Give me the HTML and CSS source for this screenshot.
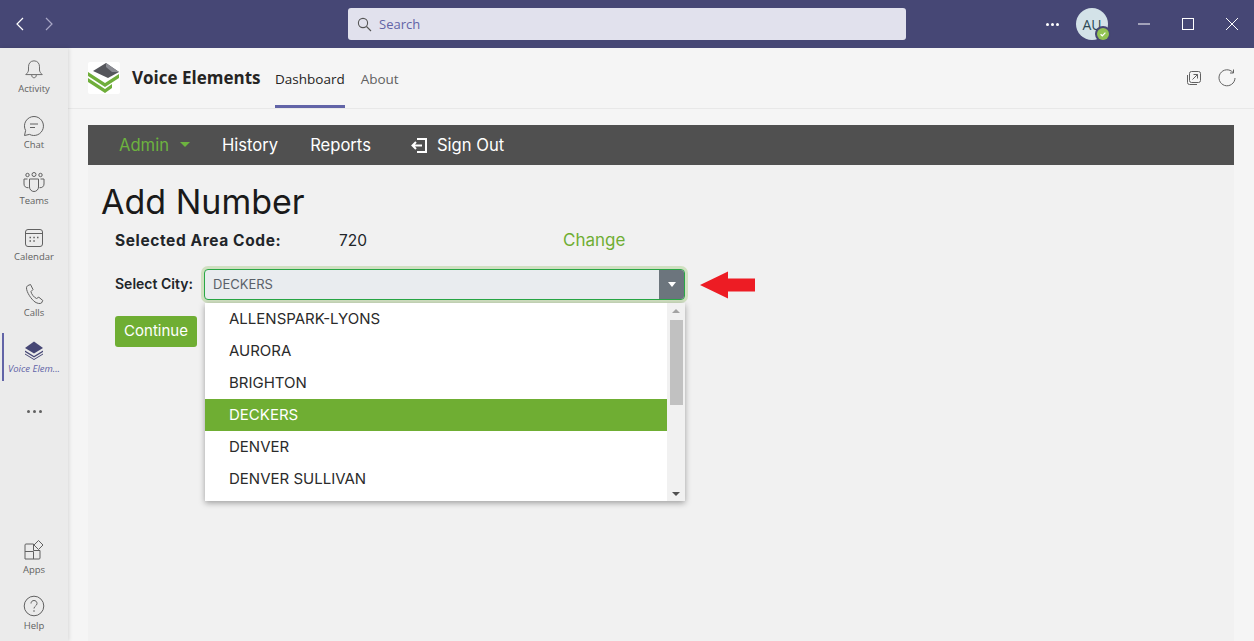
FILE: index.html
```html
<!DOCTYPE html>
<html lang="en">
<head>
  <meta charset="UTF-8" />
  <title>Voice Elements</title>
  <link rel="stylesheet" href="styles.css">
</head>
<body>

  <!-- title bar -->
  <header class="titlebar">
    <div class="history-btns">
      <svg width="10" height="14" viewBox="0 0 10 14"><path d="M8 1 2 7l6 6" fill="none" stroke="#fff" stroke-width="1.2"/></svg>
      <svg width="10" height="14" viewBox="0 0 10 14"><path d="M2 1l6 6-6 6" fill="none" stroke="#a9a8c6" stroke-width="1.2"/></svg>
    </div>
    <div class="search">
      <svg width="15" height="15" viewBox="0 0 15 15"><circle cx="6" cy="6" r="4.6" fill="none" stroke="#555" stroke-width="1.1"/><path d="M9.5 9.5 14 14" stroke="#555" stroke-width="1.1"/></svg>
      <span>Search</span>
    </div>
    <div class="win-right">
      <div class="dots"><i></i><i></i><i></i></div>
      <div class="avatar">AU
        <span class="presence"><svg width="8" height="8" viewBox="0 0 8 8"><path d="M1.6 4.2 3.3 5.8 6.4 2.6" fill="none" stroke="#fff" stroke-width="1.2"/></svg></span>
      </div>
      <div class="win-btns">
        <svg width="12" height="12" viewBox="0 0 12 12"><path d="M0 6h12" stroke="#fff" stroke-width="1"/></svg>
        <svg width="12" height="12" viewBox="0 0 12 12"><rect x=".5" y=".5" width="11" height="11" fill="none" stroke="#fff"/></svg>
        <svg width="12" height="12" viewBox="0 0 12 12"><path d="M0 0l12 12M12 0 0 12" stroke="#fff" stroke-width="1"/></svg>
      </div>
    </div>
  </header>

  <div class="shell">
    <!-- left rail -->
    <nav class="rail">
      <a class="rail-item">
        <svg width="22" height="24" viewBox="0 0 22 24"><path d="M11 2c-4 0-6 3-6 6.500v3.500c0 2-1.500 3.500-3 5h18c-1.500-1.500-3-3-3-5V8.500C17 5 15 2 11 2zM8.500 17.500c0 4 5 4 5 0" fill="none" stroke="#616161" stroke-width="1"/></svg>
        <span>Activity</span>
      </a>
      <a class="rail-item">
        <svg width="22" height="22" viewBox="0 0 22 22"><path d="M11 1.500a9.500 9.500 0 1 1-4.500 17.900L1.500 20.500l1.100-5A9.500 9.500 0 0 1 11 1.500z" fill="none" stroke="#616161" stroke-width="1"/><path d="M7 9h8M7 12.500h5" stroke="#616161" stroke-width="1"/></svg>
        <span>Chat</span>
      </a>
      <a class="rail-item">
        <svg width="22" height="22" viewBox="0 0 22 22" fill="none" stroke="#616161" stroke-width="1"><circle cx="11" cy="3.500" r="2"/><circle cx="4.500" cy="4" r="1.700"/><circle cx="17.500" cy="4" r="1.700"/><path d="M6.500 8h9v8a4.500 4.500 0 0 1-9 0z"/><path d="M4.500 8H1v5c0 2.500 2 4 4.500 3.700M17.500 8H21v5c0 2.500-2 4-4.500 3.700"/></svg>
        <span>Teams</span>
      </a>
      <a class="rail-item">
        <svg width="22" height="22" viewBox="0 0 22 22" fill="none" stroke="#616161" stroke-width="1"><rect x="2.500" y="2.500" width="17" height="17" rx="2.500"/><path d="M2.500 6.500h17"/><path d="M6.500 10.500h1.500M10.300 10.500h1.500M14 10.500h1.500M6.500 14h1.500M10.300 14h1.500" stroke-width="1.500"/></svg>
        <span>Calendar</span>
      </a>
      <a class="rail-item">
        <svg width="22" height="22" viewBox="0 0 22 22"><path d="M5 2.500 7.500 1.500 10 6.500 8 8.500c0 2 3 6 5.500 7l2.300-1.300 4 3.300-1.300 2.500c-1.500 1-4 .5-6.500-1C8 16 3.500 9 3.500 5c0-1 .5-2 1.500-2.500z" fill="none" stroke="#616161" stroke-width="1"/></svg>
        <span>Calls</span>
      </a>
      <a class="rail-item active">
        <svg width="20" height="20" viewBox="0 0 20 20" fill="#464775"><path d="M10 1.500 19 8l-9 5.500L1 8z"/><path d="M1 10.500 10 16l9-5.500 0 1.500L10 17.500 1 12zM1 13.500 10 19l9-5.500 0 1L10 20 1 14.500z"/></svg>
        <span>Voice Elem...</span>
      </a>
      <div class="rail-more"><i></i><i></i><i></i></div>
      <div class="rail-bottom">
        <a class="rail-item">
          <svg width="22" height="22" viewBox="0 0 22 22" fill="none" stroke="#616161" stroke-width="1"><path d="M10.500 5H3a1 1 0 0 0-1 1v14h14a1 1 0 0 0 1-1v-7.500H10.500zM2 12.500h8.500V20"/><path d="M15.500 1.500l4.500 4.500-4.500 4.500L11 6z"/></svg>
          <span>Apps</span>
        </a>
        <a class="rail-item">
          <svg width="22" height="22" viewBox="0 0 22 22"><circle cx="11" cy="11" r="9.800" fill="none" stroke="#616161" stroke-width="1"/><path d="M8 8.500c0-4 6-4 6 0 0 2.500-3 2.500-3 5" fill="none" stroke="#616161" stroke-width="1"/><circle cx="11" cy="16" r=".8" fill="#616161"/></svg>
          <span>Help</span>
        </a>
      </div>
    </nav>

    <main class="app">
      <!-- app header -->
      <div class="app-head">
        <div class="app-logo">
          <svg width="32" height="32" viewBox="0 0 32 32"><path d="M18 1 31 10 20 16 5 9z" fill="#55565c"/><path d="M18 1 31 10 24 10 18 5z" fill="#8a8b92"/><path d="M0 10 17 21 31 12v4L17 25 0 14z" fill="#6fae3a"/><path d="M0 16 17 27 24 22v4L17 31 0 20z" fill="#6fae3a"/></svg>
        </div>
        <div class="app-name">Voice Elements</div>
        <a class="tab current">Dashboard</a>
        <a class="tab">About</a>
        <div class="head-tools">
          <svg width="16" height="16" viewBox="0 0 16 16" fill="none" stroke="#616161" stroke-width="1"><rect x="3.500" y="1.500" width="11" height="11" rx="2"/><path d="M1.500 5v7.500a2 2 0 0 0 2 2H11"/><path d="M6.500 9.500l5-5M7.500 4.500h4v4"/></svg>
          <svg width="18" height="18" viewBox="0 0 18 18" fill="none" stroke="#616161" stroke-width="1"><path d="M15 3.500A8 8 0 1 0 17 9"/><path d="M15.500 .5v3.500H12"/></svg>
        </div>
      </div>

      <div class="panel">
        <div class="menu">
          <a class="menu-link green">Admin<span class="caret"></span></a>
          <a class="menu-link">History</a>
          <a class="menu-link">Reports</a>
          <a class="menu-link signout">
            <svg width="18" height="16" viewBox="0 0 18 16" fill="none" stroke="#fff" stroke-width="2"><path d="M7 2h9v13H7"/><path d="M12 8.500H3M6 5 2.500 8.500 6 12"/></svg>
            Sign Out
          </a>
        </div>

        <div class="page">
          <h1>Add Number</h1>
          <div class="area-row">
            <b>Selected Area Code:</b>
            <span class="area-val">720</span>
            <a class="change">Change</a>
          </div>
          <div class="city-row">
            <label>Select City:</label>
            <div class="select-wrap">
              <div class="select">
                <span class="select-val">DECKERS</span>
                <span class="select-btn"><i></i></span>
              </div>
              <div class="dropdown">
                <ul>
                  <li>ALLENSPARK-LYONS</li>
                  <li>AURORA</li>
                  <li>BRIGHTON</li>
                  <li class="selected">DECKERS</li>
                  <li>DENVER</li>
                  <li>DENVER SULLIVAN</li>
                </ul>
                <div class="scrollbar">
                  <i class="up"></i>
                  <div class="thumb"></div>
                  <i class="down"></i>
                </div>
              </div>
            </div>
            <svg class="red-arrow" width="56" height="28" viewBox="0 0 56 28"><path d="M0 14 28 .5v7h27v13H28v7z" fill="#ed1c24"/></svg>
          </div>
          <button class="continue">Continue</button>
        </div>
      </div>
    </main>
  </div>

</body>
</html>
```

FILE: styles.css
```css
:root {
  --purple: #464775;
  --accent: #6264a7;
  --green: #6fae33;
  --rail: #ebebeb;
  --grey: #616161;
}

* {
  box-sizing: border-box;
}

html, body {
  height: 100%;
}

body {
  margin: 0;
  overflow: hidden;
  font-family: "Open Sans", "Noto Sans", sans-serif;
  background-color: #f5f5f5;
  color: #252423;
  display: flex;
  flex-direction: column;
}

/* title bar */
.titlebar {
  height: 48px;
  flex: none;
  background-color: var(--purple);
  display: flex;
  align-items: center;
  position: relative;
}

.history-btns {
  display: flex;
  gap: 19px;
  padding-left: 15px;
}

.search {
  width: 558px;
  height: 32px;
  margin-left: 294px;
  background-color: #e1e1ed;
  border-radius: 3px;
  display: flex;
  align-items: center;
  gap: 7px;
  padding-left: 9px;
  font-size: 13px;
  color: var(--accent);
}

.win-right {
  margin-left: auto;
  display: flex;
  align-items: center;
}

.dots {
  display: flex;
  gap: 2px;
  margin-right: 17px;
}

.dots i {
  width: 3px;
  height: 3px;
  background-color: #fff;
  border-radius: 50%;
}

.avatar {
  width: 32px;
  height: 32px;
  border-radius: 50%;
  background-color: #d3e2e8;
  color: #2c4a55;
  font-size: 14px;
  display: flex;
  align-items: center;
  justify-content: center;
  position: relative;
}

.presence {
  position: absolute;
  right: -1px;
  bottom: 0;
  width: 12px;
  height: 12px;
  border-radius: 50%;
  background-color: #92c353;
  box-shadow: 0 0 0 2px var(--purple);
  display: flex;
  align-items: center;
  justify-content: center;
}

.win-btns {
  display: flex;
  gap: 32px;
  margin-left: 30px;
  padding-right: 16px;
}

/* left rail */
.shell {
  flex: 1;
  display: flex;
  min-height: 0;
}

.rail {
  width: 68px;
  flex: none;
  background-color: var(--rail);
  box-shadow: 1px 0 4px rgba(0,0,0,0.12);
  display: flex;
  flex-direction: column;
  padding-top: 1px;
  position: relative;
}

.rail-item {
  height: 56px;
  display: flex;
  flex-direction: column;
  align-items: center;
  justify-content: center;
  gap: 1px;
  font-size: 9.5px;
  color: var(--grey);
  position: relative;
}

.rail-item svg {
  height: 22px;
}

.rail-item.active {
  color: var(--accent);
  font-style: italic;
  font-size: 9.5px;
  white-space: nowrap;
}

.rail-item.active::before {
  content: "";
  position: absolute;
  left: 2px;
  top: 4px;
  bottom: 4px;
  width: 2px;
  background-color: var(--accent);
}

.rail-more {
  display: flex;
  justify-content: center;
  gap: 3px;
  margin-top: 25px;
}

.rail-more i {
  width: 3px;
  height: 3px;
  border-radius: 50%;
  background-color: var(--grey);
}

.rail-bottom {
  margin-top: auto;
}

.rail-bottom .rail-item {
  gap: 2px;
}

/* app area */
.app {
  flex: 1;
  min-width: 0;
  display: flex;
  flex-direction: column;
}

.app-head {
  height: 61px;
  flex: none;
  display: flex;
  align-items: stretch;
  padding: 0 20px;
  border-bottom: 1px solid #e8e8e8;
}

.app-logo {
  width: 32px;
  height: 32px;
  margin-top: 14px;
  background-color: #fff;
  border-radius: 2px;
}

.app-name {
  margin-left: 12px;
  font-size: 17px;
  font-weight: 700;
  line-height: 60px;
  width: 143px;
}

.tab {
  font-size: 13.5px;
  line-height: 62px;
  color: var(--grey);
  margin-right: 16px;
}

.tab.current {
  color: #252423;
  border-bottom: 3px solid var(--accent);
  height: 60px;
}

.head-tools {
  margin-left: auto;
  display: flex;
  align-items: center;
  gap: 16px;
  padding-bottom: 1px;
  margin-right: -2px;
}

.panel {
  flex: 1;
  margin: 16px 20px 0;
  background-color: #f1f1f1;
  font-family: "Inter", "Lato", sans-serif;
}

.menu {
  height: 40px;
  background-color: #505050;
  display: flex;
  align-items: center;
  padding-left: 31px;
  font-size: 16.6px;
  color: #fff;
}

.menu-link {
  margin-right: 32px;
  display: flex;
  align-items: center;
}

.menu-link.green {
  color: #6db33f;
}

.caret {
  margin-left: 11px;
  margin-bottom: 2px;
  border-top: 5px solid #6db33f;
  border-left: 5px solid transparent;
  border-right: 5px solid transparent;
}

.signout {
  gap: 9px;
  margin-left: 7px;
}

.page {
  padding: 18px 13px 0;
}

h1 {
  margin: 0;
  font-size: 34px;
  font-weight: 400;
  line-height: 38px;
  color: #1a1a1a;
}

.area-row {
  display: flex;
  align-items: center;
  height: 24px;
  margin: 7px 0 0 14px;
  font-size: 15.5px;
  color: #212529;
}

.area-row b {
  width: 224px;
  letter-spacing: 0.6px;
}

.area-val {
  width: 224px;
}

.change {
  color: #6fae33;
  font-size: 17px;
}

.city-row {
  display: flex;
  align-items: center;
  margin: 17px 0 0 14px;
  font-size: 14px;
  font-weight: 600;
  color: #212529;
}

.city-row label {
  width: 89px;
  margin-bottom: 2px;
}

.select-wrap {
  width: 481px;
  position: relative;
}

.select {
  height: 31px;
  display: flex;
  border: 1px solid #28a745;
  border-radius: 4px;
  background-color: #e9ecef;
  box-shadow: 0 0 0 3px rgba(111,174,51,0.25);
  overflow: hidden;
}

.select-val {
  flex: 1;
  padding-left: 8px;
  line-height: 29px;
  font-size: 13px;
  font-weight: 400;
  color: #5a6169;
}

.select-btn {
  width: 25px;
  background-color: #6c757d;
  display: flex;
  align-items: center;
  justify-content: center;
}

.select-btn i {
  border-top: 5px solid #fff;
  border-left: 4px solid transparent;
  border-right: 4px solid transparent;
}

.dropdown {
  position: absolute;
  top: 34px;
  left: 1px;
  width: 480px;
  height: 198px;
  background-color: #fff;
  box-shadow: 0 2px 6px rgba(0,0,0,0.35);
  display: flex;
  font-size: 15px;
  font-weight: 400;
  color: #2b2b2b;
  z-index: 5;
}

.dropdown ul {
  flex: 1;
  margin: 0;
  padding: 0;
  list-style: none;
}

.dropdown li {
  height: 32px;
  line-height: 32px;
  padding-left: 24px;
}

.dropdown li.selected {
  background-color: var(--green);
  color: #fff;
}

.scrollbar {
  width: 18px;
  background-color: #f1f1f1;
  display: flex;
  flex-direction: column;
  align-items: center;
  padding: 6px 0 5px;
}

.scrollbar .up {
  border-bottom: 4px solid #a3a3a3;
  border-left: 4px solid transparent;
  border-right: 4px solid transparent;
}

.scrollbar .thumb {
  width: 13px;
  height: 85px;
  margin-top: 7px;
  background-color: #c1c1c1;
}

.scrollbar .down {
  margin-top: auto;
  border-top: 4px solid #505050;
  border-left: 4px solid transparent;
  border-right: 4px solid transparent;
}

.red-arrow {
  margin-left: 15px;
}

.continue {
  display: block;
  margin: 16px 0 0 14px;
  width: 82px;
  height: 31px;
  border: none;
  border-radius: 3px;
  background-color: var(--green);
  color: #fff;
  font-family: inherit;
  font-size: 15px;
  line-height: 29px;
  padding: 0 0 2px;
}
```
